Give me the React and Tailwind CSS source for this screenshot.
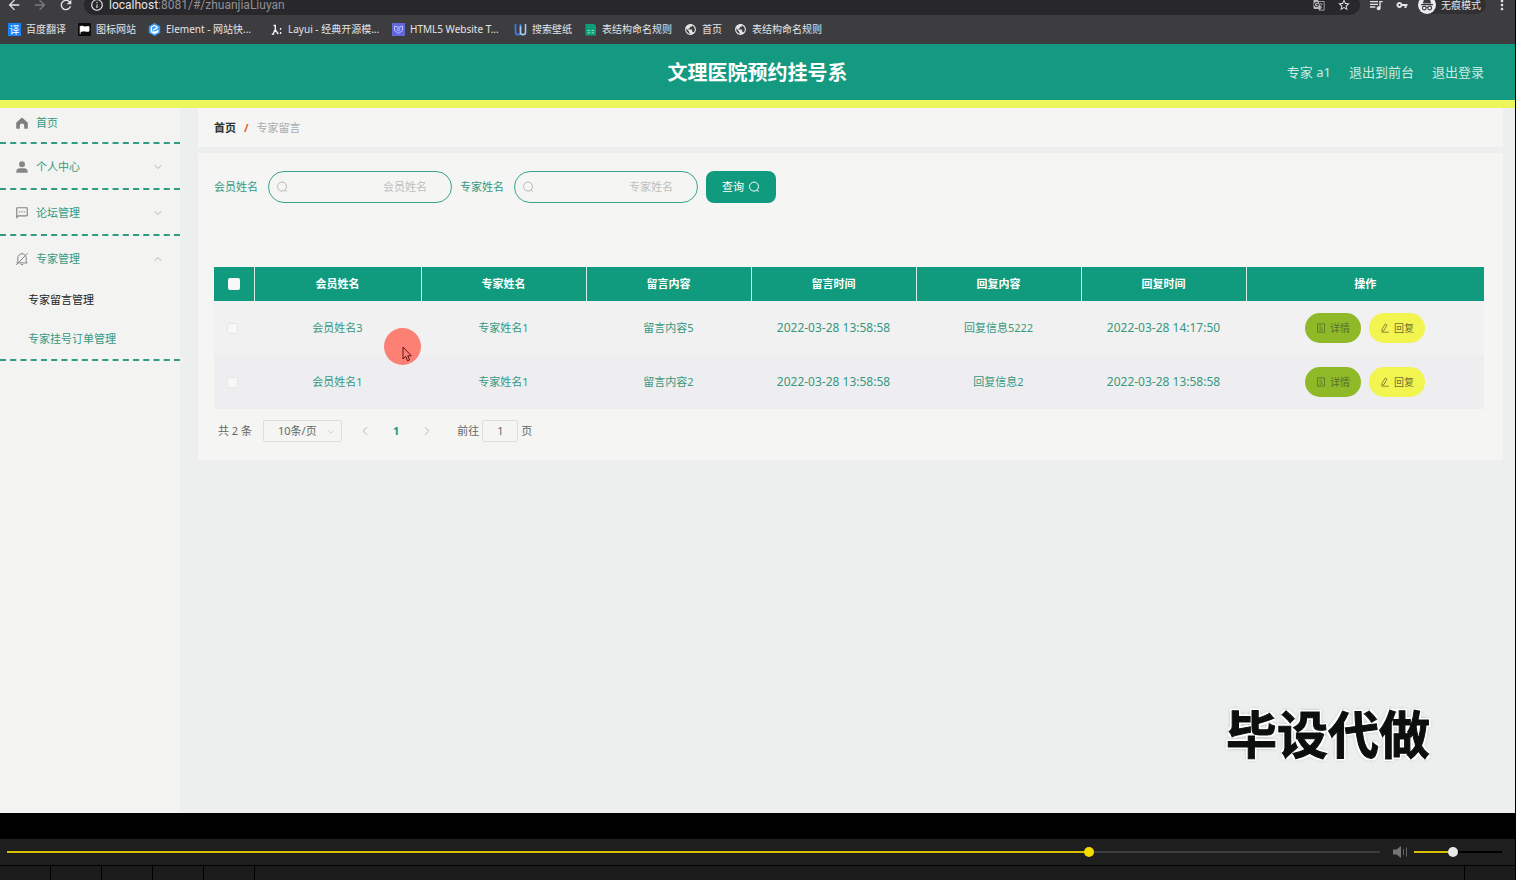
import React, { useState } from 'react';
import {
    MdArrowBack,
    MdArrowForward,
    MdRefresh,
    MdInfoOutline,
    MdGTranslate,
    MdStarBorder,
    MdQueueMusic,
    MdVpnKey,
    MdMoreVert,
    MdPublic,
    MdOutlineSms,
} from 'react-icons/md';
import { ChevronDown, ChevronLeft, ChevronRight, ChevronUp } from 'lucide-react';

// 表格列
const COLUMNS = ['会员姓名', '专家姓名', '留言内容', '留言时间', '回复内容', '回复时间'];

const ROWS = [
    { id: 1, cells: ['会员姓名3', '专家姓名1', '留言内容5', '2022-03-28 13:58:58', '回复信息5222', '2022-03-28 14:17:50'] },
    { id: 2, cells: ['会员姓名1', '专家姓名1', '留言内容2', '2022-03-28 13:58:58', '回复信息2', '2022-03-28 13:58:58'] },
];

function SearchIcon({ className }) {
    return (
        <svg viewBox="0 0 12 12" className={className} fill="none" stroke="currentColor" aria-hidden="true">
            <circle cx="6" cy="5.6" r="4.5" />
            <path d="M8.8 9 L10.6 10.8" />
        </svg>
    );
}

function HomeIcon() {
    return (
        <svg viewBox="0 0 12 12" className="size-3" aria-hidden="true">
            <path fill="#7d7f7e" d="M6 .5 11.4 5.2c.3.3.4.5.4.9V11c0 .5-.3.8-.8.8H8.2V8.6a2.2 2.2 0 0 0-4.4 0v3.2H1c-.5 0-.8-.3-.8-.8V6.1c0-.4.1-.6.4-.9z" />
        </svg>
    );
}

function UserIcon() {
    return (
        <svg viewBox="0 0 12 12" className="size-3" fill="currentColor" aria-hidden="true">
            <circle cx="6" cy="3.2" r="3" />
            <path d="M.4 11.8V10C.4 8.2 2 7.2 4 7.2h4c2 0 3.6 1 3.6 2.8v1.8z" />
        </svg>
    );
}

function BellOffIcon() {
    return (
        <svg viewBox="0 0 14 14" className="size-[14px] shrink-0" fill="none" stroke="currentColor" aria-hidden="true">
            <path d="M1.5 10.9h11M2.8 10.8V6a4.2 4.2 0 0 1 8.4 0v4.8M7 .8v1M5.8 12.6h2.4M12.6 1.2 1.2 13" />
        </svg>
    );
}

function IncognitoIcon() {
    return (
        <svg viewBox="0 0 18 18" className="size-[18px]" aria-hidden="true">
            <circle cx="9" cy="9" r="9" fill="#ececee" />
            <path d="M6 3.5h6l1.2 4H4.8z" fill="#3a393c" />
            <path d="M3 8.6h12" stroke="#3a393c" strokeWidth="1.2" />
            <circle cx="6.3" cy="12" r="1.9" fill="none" stroke="#3a393c" strokeWidth="1.1" />
            <circle cx="11.7" cy="12" r="1.9" fill="none" stroke="#3a393c" strokeWidth="1.1" />
            <path d="M8 11.7q1-.8 2 0" fill="none" stroke="#3a393c" />
        </svg>
    );
}

function DetailIcon() {
    return (
        <svg viewBox="0 0 10 10" className="size-[10px]" fill="none" stroke="currentColor" strokeWidth="0.8" aria-hidden="true">
            <path d="M1.5.8h7v8.4h-7zM3.4 3h2M3.4 5h3.2M3.4 7h3.2" />
        </svg>
    );
}

function EditIcon() {
    return (
        <svg viewBox="0 0 10 10" className="size-[10px]" fill="none" stroke="currentColor" strokeWidth="0.8" aria-hidden="true">
            <path d="M5.2 1 7 2 4 7.4 1.8 8.6 2 6.2zM1.8 9.2h7" />
        </svg>
    );
}

// 书签图标
const bookmarkIcons = {
    translate: <span className="flex size-[13px] items-center justify-center bg-[#1684f8] text-[10px] leading-none text-white">译</span>,
    flag: (
        <svg viewBox="0 0 13 13" className="size-[13px]">
            <rect width="13" height="13" rx="1" fill="#0c0c0d" />
            <path d="M2.2 3v8M2.5 3.4c2-1 3 .8 5 .4l3.5-.3v4.6c-2 1-3.5-.3-5-.2l-3.5.6z" fill="#fff" stroke="#fff" strokeWidth=".8" />
        </svg>
    ),
    element: (
        <svg viewBox="0 0 13 13" className="size-[13px]">
            <path d="M6.5 0 12.2 3.2v6.6L6.5 13 .8 9.8V3.2z" fill="#3a9dfa" />
            <path d="M9.7 4.2 6.3 2.4 3.4 4v5l3 1.6 3.4-1.8V7.6L6.3 9.3 4.6 8.4M9.7 4.6 4.8 7.2" fill="none" stroke="#fff" strokeWidth="1.2" />
        </svg>
    ),
    layui: (
        <svg viewBox="0 0 13 13" className="size-[13px]">
            <path d="M3.5 2.5h1.8v4.5l3 4M4.8 7 3.4 11M1.8 11h2.4M10.6 5v1.8M10.6 9v2" fill="none" stroke="#f2f2f2" strokeWidth="1.4" />
        </svg>
    ),
    html: (
        <svg viewBox="0 0 13 13" className="size-[13px]">
            <rect width="13" height="13" fill="#6267dc" />
            <path d="M2.5 3l4 1.3 4-1.3v4.6L6.5 10.5 2.5 7.6z" fill="none" stroke="#b9c4ff" />
            <circle cx="6.5" cy="6.5" r="1.3" fill="none" stroke="#b9c4ff" />
        </svg>
    ),
    wallpaper: (
        <svg viewBox="0 0 13 13" className="size-[13px]" fill="none">
            <path d="M1.5 1v8c0 3.5 5 3.5 5 0V1" stroke="#3b7ce6" strokeWidth="1.8" />
            <path d="M6.5 3v6.5c0 2.8 5 2.8 5 0V1" stroke="#a9c6f5" strokeWidth="1.6" />
        </svg>
    ),
    sheet: (
        <svg viewBox="0 0 13 13" className="size-[13px]">
            <path d="M1.5 1h8.5l2 2v9.5H1.5z" fill="#0d9f77" />
            <path d="M3.5 7.5h2.5M7.5 7.5h2.5M3.5 9.8h2.5M7.5 9.8h2.5" stroke="#bfe8da" strokeWidth=".8" />
        </svg>
    ),
    globe: <MdPublic className="size-[13px]" />,
};

const BOOKMARKS = [
    { icon: 'translate', name: '百度翻译' },
    { icon: 'flag', name: '图标网站' },
    { icon: 'element', name: 'Element - 网站快...', width: 'w-[92px]' },
    { icon: 'layui', name: 'Layui - 经典开源模...', width: 'w-[92px]' },
    { icon: 'html', name: 'HTML5 Website T...', width: 'w-[92px]' },
    { icon: 'wallpaper', name: '搜索壁纸' },
    { icon: 'sheet', name: '表结构命名规则' },
    { icon: 'globe', name: '首页' },
    { icon: 'globe', name: '表结构命名规则' },
];

function BrowserBar() {
    return (
        <div className="shrink-0 bg-[#3d3c3f] text-[#e4e4e6]">
            {/* 地址栏 */}
            <div className="flex h-[15px] items-end overflow-hidden">
                <div className="flex h-5 w-full shrink-0 items-center">
                    <div className="flex w-[84px] items-center gap-[10px] pl-[6px]">
                        <button type="button" aria-label="后退"><MdArrowBack className="size-4" /></button>
                        <button type="button" aria-label="前进"><MdArrowForward className="size-4 text-[#7c7b7e]" /></button>
                        <button type="button" aria-label="刷新"><MdRefresh className="size-4" /></button>
                    </div>
                    <div className="flex h-5 flex-1 items-center rounded-full bg-[#28272a] pr-[9px] pl-[6px]">
                        <MdInfoOutline className="size-[14px]" />
                        <span className="ml-[5px] flex-1 font-[Roboto,sans-serif] text-[12px] leading-[10px] text-[#929195]">
                            <span className="text-[#e4e4e6]">localhost</span>:8081/#/zhuanjiaLiuyan
                        </span>
                        <div className="flex items-center gap-3">
                            <MdGTranslate className="size-3 text-[#b9b9bb]" />
                            <MdStarBorder className="size-[14px]" />
                        </div>
                    </div>
                    <div className="flex items-center pr-[5px] pl-2">
                        <MdQueueMusic className="size-4" />
                        <MdVpnKey className="ml-3 size-3" />
                        <span className="ml-[10px] flex items-center gap-[5px] rounded-full bg-[#302f32] pr-[5px] text-[10px] leading-[10px]">
                            <IncognitoIcon />
                            无痕模式
                        </span>
                        <MdMoreVert className="ml-2 size-4" />
                    </div>
                </div>
            </div>
            {/* 书签栏 */}
            <nav className="flex h-[29px] items-center gap-3 pl-2 text-[10px]">
                {BOOKMARKS.map((item, index) => (
                    <a key={index} href="#bookmark" className="flex items-center gap-[5px] whitespace-nowrap">
                        {bookmarkIcons[item.icon]}
                        <span className={item.width}>{item.name}</span>
                    </a>
                ))}
            </nav>
        </div>
    );
}

function MenuItem({ icon, name, arrow: Arrow }) {
    return (
        <a href="#menu" className="flex h-11 items-center px-4 pt-0.5">
            <span className="flex size-3 items-center justify-center text-[#858786]">{icon}</span>
            <span className="ml-2 flex-1">{name}</span>
            <Arrow className="size-3 text-[#9ba09f]" strokeWidth={1.5} />
        </a>
    );
}

function Sidebar() {
    return (
        <aside className="w-[180px] shrink-0 bg-[#f3f4f2] text-[11px] text-[#36987f]">
            <a href="#home" className="flex h-9 items-center border-b-2 border-dashed border-[#2f9c84] pb-1 pl-4">
                <HomeIcon />
                <span className="ml-2">首页</span>
            </a>
            <div className="border-b-2 border-dashed border-[#2f9c84]">
                <MenuItem icon={<UserIcon />} name="个人中心" arrow={ChevronDown} />
            </div>
            <div className="border-b-2 border-dashed border-[#2f9c84]">
                <MenuItem icon={<MdOutlineSms className="size-[14px] shrink-0" />} name="论坛管理" arrow={ChevronDown} />
            </div>
            <div className="border-b-2 border-dashed border-[#2f9c84]">
                <MenuItem icon={<BellOffIcon />} name="专家管理" arrow={ChevronUp} />
                <a href="#liuyan" className="flex h-10 items-center pl-7 text-[#222]">专家留言管理</a>
                <a href="#guahao" className="flex h-[39px] items-center pl-7">专家挂号订单管理</a>
            </div>
        </aside>
    );
}

function SearchField({ id, label }) {
    return (
        <div className="flex items-center">
            <label htmlFor={id} className="mr-[10px]">{label}</label>
            <div className="relative">
                <SearchIcon className="absolute top-[10px] left-2 size-3 text-[#b4b9b7]" />
                <input
                    id={id}
                    type="text"
                    placeholder={label}
                    className="block h-8 w-[184px] rounded-full border border-[#3da38d] px-6 pb-0.5 text-right placeholder:text-[#bcc0be] focus:outline-none"
                />
            </div>
        </div>
    );
}

function MessageTable() {
    return (
        <table className="w-full table-fixed border-collapse text-center">
            <colgroup>
                <col className="w-10" />
                <col className="w-[167px]" />
                <col />
                <col />
                <col />
                <col />
                <col />
                <col className="w-[238px]" />
            </colgroup>
            <thead>
                <tr className="h-[34px] bg-[#109a7e] text-white">
                    <th className="border-r border-[#d5ebe5]">
                        <input type="checkbox" aria-label="全选" className="mx-auto block size-3 appearance-none rounded-xs bg-[#f7f8f7]" />
                    </th>
                    {COLUMNS.map(name => (
                        <th key={name} className="border-r border-[#d5ebe5] font-bold">{name}</th>
                    ))}
                    <th className="font-bold">操作</th>
                </tr>
            </thead>
            <tbody>
                {ROWS.map(row => (
                    <tr key={row.id} className="h-[54px] bg-[#f1f1f1] text-[#36987f] even:bg-[#eeeef0]">
                        <td>
                            <input type="checkbox" aria-label={row.cells[0]} className="mr-1 inline-block size-[11px] appearance-none rounded-xs border border-[#e6e8e8] bg-[#f7f7f7] align-middle" />
                        </td>
                        {row.cells.map((cell, index) => (
                            <td key={index} className={COLUMNS[index].endsWith('时间') ? 'text-[12px]' : ''}>{cell}</td>
                        ))}
                        <td>
                            <div className="flex justify-center gap-2">
                                <button type="button" className="flex h-[30px] w-14 items-center justify-center gap-1 rounded-full bg-[#90b928] text-[10px] text-[#55702c]">
                                    <DetailIcon />详情
                                </button>
                                <button type="button" className="flex h-[30px] w-14 items-center justify-center gap-1 rounded-full bg-[#f2f450] text-[10px] text-[#6e7034]">
                                    <EditIcon />回复
                                </button>
                            </div>
                        </td>
                    </tr>
                ))}
            </tbody>
        </table>
    );
}

function Pagination() {
    return (
        <div className="mt-[11px] flex h-[22px] items-center pl-1 text-[#646866]">
            <span>共 2 条</span>
            <div className="relative ml-[11px]">
                <select aria-label="每页条数" className="block h-[22px] w-[79px] appearance-none rounded-xs border border-[#dcdfde] pl-[14px]">
                    <option>10条/页</option>
                </select>
                <ChevronDown className="pointer-events-none absolute top-[7px] right-[6px] size-[10px] text-[#b4b8b6]" strokeWidth={1.5} />
            </div>
            <button type="button" aria-label="上一页" className="ml-4 text-[#a9adab]"><ChevronLeft className="size-[14px]" strokeWidth={1.5} /></button>
            <button type="button" className="mx-[21px] font-bold text-[#149a80]">1</button>
            <button type="button" aria-label="下一页" className="text-[#a9adab]"><ChevronRight className="size-[14px]" strokeWidth={1.5} /></button>
            <label htmlFor="page" className="ml-[23px]">前往</label>
            <input id="page" type="text" defaultValue="1" className="mx-[3px] h-[22px] w-9 rounded-xs border border-[#dcdfde] pb-0.5 text-center" />
            <span>页</span>
        </div>
    );
}

function Slider({ label, value, onChange, rest, className }) {
    return (
        <input
            type="range"
            min="0"
            max="1000"
            aria-label={label}
            value={value}
            onChange={(e) => onChange(Number(e.target.value))}
            className={className}
            style={{
                backgroundImage: `linear-gradient(to right, #d8c000 ${value / 10}%, ${rest} ${value / 10}%)`,
            }}
        />
    );
}

function Player() {
    const [progress, setProgress] = useState(790);
    const [volume, setVolume] = useState(436);

    return (
        <div className="shrink-0 bg-black pt-[26px]">
            <div className="flex h-[26px] items-center bg-[#1e1e1e] pr-[13px] pl-[7px]">
                <Slider
                    label="播放进度"
                    value={progress}
                    onChange={setProgress}
                    rest="#3c3c3c"
                    className="h-[10px] min-w-0 flex-1 appearance-none bg-[length:100%_2px] bg-center bg-no-repeat [&::-webkit-slider-thumb]:size-[10px] [&::-webkit-slider-thumb]:appearance-none [&::-webkit-slider-thumb]:rounded-full [&::-webkit-slider-thumb]:bg-[#f5dc00]"
                />
                <button type="button" aria-label="静音" className="mr-[7px] ml-[13px]">
                    <svg viewBox="0 0 14 12" className="h-3 w-[14px]">
                        <path d="M0 3.5h3.5L8 0v12L3.5 8.5H0z" fill="#757575" />
                        <path d="M10.5 3v6M13.5 1.5v9" stroke="#606060" />
                    </svg>
                </button>
                <Slider
                    label="音量"
                    value={volume}
                    onChange={setVolume}
                    rest="#000"
                    className="h-[10px] w-[88px] appearance-none bg-[length:100%_2px] bg-center bg-no-repeat [&::-webkit-slider-thumb]:size-[10px] [&::-webkit-slider-thumb]:appearance-none [&::-webkit-slider-thumb]:rounded-full [&::-webkit-slider-thumb]:bg-[#e8e8e8]"
                />
            </div>
            <div className="mt-px flex h-[14px] bg-[#1c1c1c]">
                {[1, 2, 3, 4, 5].map(n => (
                    <div key={n} className="w-[51px] border-r border-black"></div>
                ))}
                <div className="flex-1 border-r border-black"></div>
                <div className="w-[50px]"></div>
            </div>
        </div>
    );
}

export default function App() {
    return (
        <div className="flex h-screen flex-col overflow-hidden border-r border-black bg-[#edefee] font-['Noto_Sans','Noto_Sans_CJK_SC',sans-serif]">
            <BrowserBar />

            <header className="grid h-16 shrink-0 grid-cols-3 items-center border-b-8 border-[#ecf55c] bg-[#149a80] pt-0.5 text-white">
                <h1 className="col-start-2 text-center text-[20px] font-bold">文理医院预约挂号系</h1>
                <div className="flex justify-end gap-[18px] pr-[31px] text-[13px] text-[#cfe9e1]">
                    <span>专家 a1</span>
                    <a href="#front">退出到前台</a>
                    <a href="#logout">退出登录</a>
                </div>
            </header>

            <div className="relative flex min-h-0 flex-1 text-[11px]">
                <Sidebar />
                <main className="min-w-0 flex-1 pr-3 pl-[18px]">
                    {/* 面包屑 */}
                    <nav className="flex h-[39px] items-center gap-2 bg-[#f5f5f4] pt-0.5 pl-4">
                        <a href="#home" className="font-bold text-[#303133]">首页</a>
                        <span className="font-bold text-[#f0582c]">/</span>
                        <span className="text-[#a9abb0]">专家留言</span>
                    </nav>

                    <section className="mt-[6px] bg-[#f5f6f4] pt-[18px] pr-[19px] pb-[18px] pl-4">
                        <form className="mb-16 flex items-center gap-2 text-[#36987f]" onSubmit={(e) => e.preventDefault()}>
                            <SearchField id="huiyuan" label="会员姓名" />
                            <SearchField id="zhuanjia" label="专家姓名" />
                            <button type="submit" className="flex h-8 w-[70px] items-center justify-center gap-1 rounded-lg bg-[#109a7e] text-white">
                                查询 <SearchIcon className="size-3" />
                            </button>
                        </form>
                        <MessageTable />
                        <Pagination />
                    </section>
                </main>

                {/* 鼠标点击光圈 */}
                <div className="pointer-events-none absolute top-[220px] left-[384px] size-[37px] rounded-full bg-[#fd8074]">
                    <svg viewBox="0 0 10 16" className="absolute top-[18px] left-[18px] h-4 w-[10px]">
                        <path d="M1 1v12l2.7-2.5 1.9 4.3 2-.9-1.9-4.1h3.6z" fill="#fd8074" stroke="#5d1513" />
                    </svg>
                </div>

                {/* 水印 */}
                <div className="pointer-events-none absolute right-[85px] bottom-[42px] text-[51px] leading-[74px] font-bold text-[#0c0f0e] [-webkit-text-stroke:1px_#0c0f0e] [text-shadow:2px_2px_0_#fff,-2px_-2px_0_#fff,2px_-2px_0_#fff,-2px_2px_0_#fff,0_0_4px_#555]">
                    毕设代做
                </div>
            </div>

            <Player />
        </div>
    );
}
